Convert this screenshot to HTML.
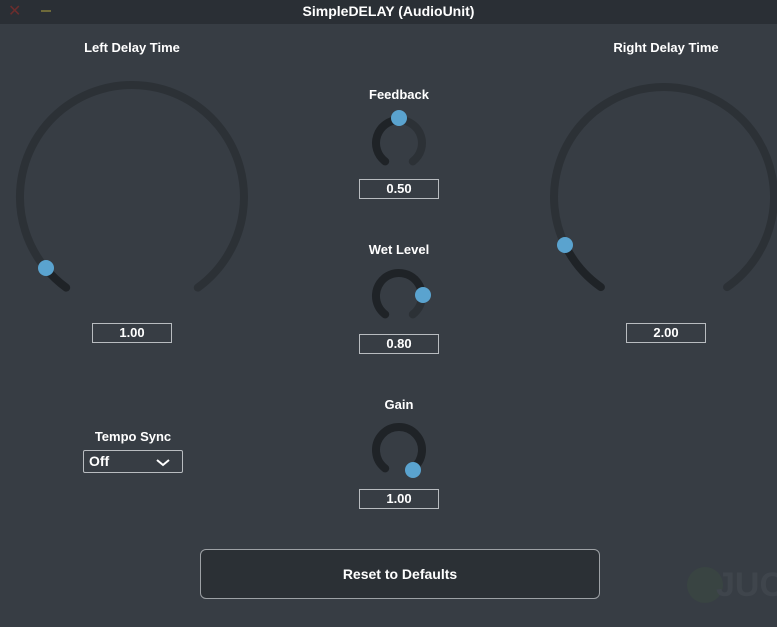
<html><head><style>
body{margin:0;width:777px;height:627px;background:#373d44;overflow:hidden;font-family:"Liberation Sans",sans-serif;color:#fff;position:relative}
.t{position:absolute;font-size:13px;font-weight:bold;text-align:center;width:200px}
.b{position:absolute;width:78px;height:18px;border:1px solid #b8bcc0;font-size:13px;font-weight:bold;text-align:center;line-height:18px;box-sizing:content-box}
</style></head><body>
<div style="position:absolute;left:0;top:0;width:777px;height:24px;background:#2a2f35"></div>
<div style="position:absolute;left:0;top:3px;width:777px;text-align:center;font-size:14px;font-weight:bold">SimpleDELAY (AudioUnit)</div>
<div style="position:absolute;left:8px;top:1px;color:#6b2d2d;font-size:16px">✕</div>
<div style="position:absolute;left:41px;top:10px;width:10px;height:2px;background:#6e6a3a"></div>
<svg width="777" height="627" style="position:absolute;left:0;top:0" fill="none" stroke-width="8" stroke-linecap="round">
<g stroke="#2c3136">
<path d="M45.6,268.3 A112,112 0 1 1 197.8,287.6"/>
<path d="M565.1,245.1 A110,110 0 1 1 727.1,287.1"/>
<path d="M399,120 A23,23 0 0 1 412.8,161.4"/>
<path d="M421.9,294.3 A23,23 0 0 1 412.8,314.4"/>
</g>
<g stroke="#1f2327">
<path d="M66.2,287.6 A112,112 0 0 1 45.6,268.3"/>
<path d="M600.9,287.1 A110,110 0 0 1 565.1,245.1"/>
<path d="M385.2,161.4 A23,23 0 0 1 399,120"/>
<path d="M385.2,314.4 A23,23 0 1 1 421.9,294.3"/>
<path d="M385.2,468.4 A23,23 0 1 1 412.8,468.4"/>
</g>
<g fill="#5aa3cf" stroke="none">
<circle cx="46" cy="268" r="8"/><circle cx="565" cy="245" r="8"/>
<circle cx="399" cy="118" r="8"/><circle cx="423" cy="295" r="8"/><circle cx="413" cy="470" r="8"/>
</g>
<circle cx="705" cy="585" r="18" fill="#3b4a41" stroke="none" opacity="0.6"/>
</svg>
<div class="t" style="left:32px;top:40px">Left Delay Time</div>
<div class="t" style="left:566px;top:40px">Right Delay Time</div>
<div class="t" style="left:299px;top:87px">Feedback</div>
<div class="t" style="left:299px;top:242px">Wet Level</div>
<div class="t" style="left:299px;top:397px">Gain</div>
<div class="t" style="left:33px;top:429px">Tempo Sync</div>
<div class="b" style="left:92px;top:323px">1.00</div>
<div class="b" style="left:626px;top:323px">2.00</div>
<div class="b" style="left:359px;top:179px">0.50</div>
<div class="b" style="left:359px;top:334px">0.80</div>
<div class="b" style="left:359px;top:489px">1.00</div>
<div style="position:absolute;left:83px;top:450px;border:1px solid #b8bcc0;border-radius:2px;font-size:14px;font-weight:bold;line-height:21px;padding-left:5px;box-sizing:border-box;width:100px;height:23px">Off
<svg width="14" height="8" style="position:absolute;right:12px;top:8px"><path d="M1,1 L7,6 L13,1" stroke="#fff" stroke-width="2" fill="none"/></svg></div>
<div style="position:absolute;left:200px;top:549px;width:400px;height:50px;box-sizing:border-box;border:1px solid #9da1a5;border-radius:6px;background:#2b3035;text-align:center;line-height:48px;font-size:14px;font-weight:bold">Reset to Defaults</div>
<div style="position:absolute;left:716px;top:566px;font-size:34px;font-weight:bold;color:#3f454c">JUC</div>
</body></html>
